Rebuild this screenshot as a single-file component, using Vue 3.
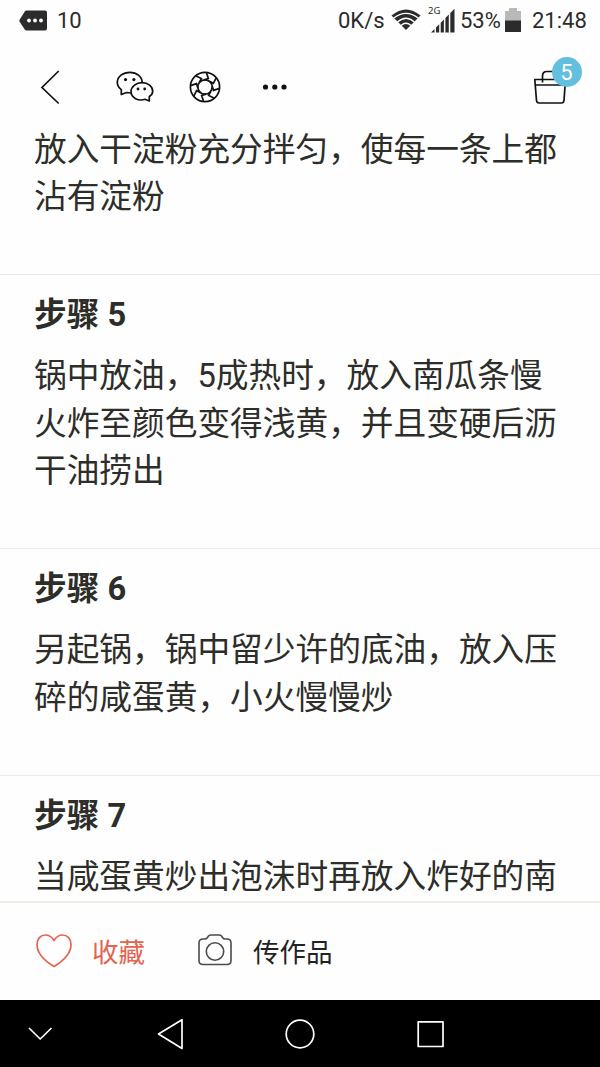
<script setup>
const steps = [
  { id: 4, title: '', lines: ['放入干淀粉充分拌匀，使每一条上都', '沾有淀粉'] },
  { id: 5, title: '步骤 5', lines: ['锅中放油，5成热时，放入南瓜条慢', '火炸至颜色变得浅黄，并且变硬后沥', '干油捞出'] },
  { id: 6, title: '步骤 6', lines: ['另起锅，锅中留少许的底油，放入压', '碎的咸蛋黄，小火慢慢炒'] },
  { id: 7, title: '步骤 7', lines: ['当咸蛋黄炒出泡沫时再放入炸好的南'] },
]
const blades = [0, 45, 90, 135, 180, 225, 270, 315]
</script>

<template>
  <div class="screen">
    <header class="status">
      <svg class="note" width="29" height="22" viewBox="0 0 29 22">
        <path d="M7.5 .5H26a2 2 0 0 1 2 2v16a2 2 0 0 1-2 2H7.5Q6.5 20.500 5.800 19.500L.6 11.800Q0 10.800 .6 9.800L5.800 1.500Q6.500 .5 7.500 .5Z" fill="#2b2b2b" />
        <g fill="#fff"><circle cx="10" cy="10.500" r="1.900" /><circle cx="16" cy="10.500" r="1.900" /><circle cx="22" cy="10.500" r="1.900" /></g>
      </svg>
      <span class="count">10</span>
      <span class="speed">0K/s</span>
      <svg class="wifi" width="30" height="22" viewBox="0 0 30 22">
        <path d="M.5 6.500Q15-5.500 29.500 6.500L15 21Z" fill="#2b2b2b" />
        <g fill="none" stroke="#fff" stroke-width="1.200">
          <path d="M2.500 9.300Q15-.5 27.500 9.300" />
          <path d="M6.500 13Q15 5.500 23.500 13" />
          <path d="M10 16.500Q15 12 20 16.500" />
        </g>
      </svg>
      <div class="cell">
        <span class="gen">2G</span>
        <svg width="24" height="26" viewBox="0 0 24 26" fill="#2b2b2b">
          <path d="M0 24.500L3.500 21V24.500ZM5 24.500V19.500L8.200 16.300V24.500ZM9.700 24.500V14.800L12.900 11.600V24.500ZM14.400 24.500V10L17.800 6.600V24.500ZM19.300 24.500V5L23.500 .8V24.500Z" />
        </svg>
      </div>
      <span class="pct">53%</span>
      <svg class="battery" width="16" height="25" viewBox="0 0 16 25">
        <path d="M0 3H4V0H12V3H16V13H0Z" fill="#b9b9b9" /><path d="M0 12.500H16V24H0Z" fill="#2b2b2b" />
      </svg>
      <span class="time">21:48</span>
    </header>

    <nav class="toolbar">
      <svg class="back" width="22" height="38" viewBox="0 0 22 38" fill="none" stroke="#111" stroke-width="1.700">
        <path d="M18.700 3L2 19.500L18.700 35.500" />
      </svg>
      <svg class="wechat" width="40" height="34" viewBox="0 0 40 34" fill="none" stroke="#111" stroke-width="1.700" stroke-linejoin="round">
        <path d="M15 23L10.500 22.500L5.300 24.500V19.700C2.700 17.600 1.300 15 1.300 12.500C1.300 6.500 7 2.300 14 2.300C20.500 2.300 26 6.300 26.300 12.600" />
        <path d="M33.300 26.500V31L29 29.300C22.500 31.500 15 28 15 21.600C15 16.700 20 12.700 26 12.700C32 12.700 36.700 16.500 36.700 21.300C36.700 23.500 35.500 25.300 33.300 26.500Z" />
        <g fill="#111" stroke="none"><circle cx="9.500" cy="9.600" r="1.600" /><circle cx="17.900" cy="9.600" r="1.600" /><circle cx="22" cy="19" r="1.400" /><circle cx="28.700" cy="19" r="1.400" /></g>
      </svg>
      <svg class="aperture" width="32" height="32" viewBox="-16 -16 32 32" fill="none" stroke="#111" stroke-width="1.700">
        <circle r="14.600" /><circle r="7.200" />
        <path v-for="a in blades" :key="a" d="M-6.300 -3.500L-4.800 -7.800L-10.800 -9.900" :transform="`rotate(${a + 8})`" />
      </svg>
      <svg class="more" width="26" height="8" viewBox="0 0 26 8" fill="#111">
        <circle cx="3.500" cy="4" r="2.600" /><circle cx="12.800" cy="4" r="2.600" /><circle cx="22" cy="4" r="2.600" />
      </svg>
      <div class="basket">
        <svg width="34" height="36" viewBox="0 0 34 36" fill="none" stroke="#111" stroke-width="1.700" stroke-linejoin="round">
          <path d="M1.800 10.500H32.500L31 31.500Q30.700 34 28.500 34H6Q3.800 34 3.500 31.500ZM2.500 16H32M9.500 13.500V7Q9.500 2.500 14 2.500H20.500Q25 2.500 25 7V12.500" />
        </svg>
        <span class="badge">5</span>
      </div>
    </nav>

    <main class="recipe">
      <section v-for="s in steps" :key="s.id" class="step">
        <h2 v-if="s.title">{{ s.title }}</h2>
        <p v-for="l in s.lines" :key="l">{{ l }}</p>
      </section>
    </main>

    <footer class="actions">
      <svg class="heart" width="38" height="36" viewBox="0 0 38 36" fill="none" stroke="#e36450" stroke-width="1.700" stroke-linejoin="round">
        <path d="M19 7.500C16.500 3.500 13.500 2 10.500 2C5.500 2 2 6 2 11.500C2 20 9 27.500 19 33.500C29 27.500 36 20 36 11.500C36 6 32.500 2 27.500 2C24.500 2 21.500 3.500 19 7.500Z" />
      </svg>
      <span class="fav">收藏</span>
      <svg class="camera" width="36" height="34" viewBox="0 0 36 34" fill="none" stroke="#4b4b4b" stroke-width="1.600" stroke-linejoin="round">
        <path d="M6 6H8Q9.500 6 10.500 4.500L11.500 3Q12.500 2 14 2H22Q23.500 2 24.500 3L25.500 4.500Q26.500 6 28 6H30Q34 6 34 10V27.500Q34 31.500 30 31.500H6Q2 31.500 2 27.500V10Q2 6 6 6Z" />
        <circle cx="18" cy="18.500" r="8.700" />
      </svg>
      <span class="upload">传作品</span>
    </footer>

    <div class="system">
      <svg width="600" height="67" viewBox="0 0 600 67" fill="none" stroke="#fff" stroke-width="1.700" stroke-linejoin="round">
        <path d="M29 28L40.200 39L51.500 28" />
        <path d="M182 19.700V48.500L158.500 34Z" />
        <circle cx="300" cy="34" r="13.800" />
        <path d="M418.200 21.800H443V46.500H418.200Z" />
      </svg>
    </div>
  </div>
</template>

<style>
body { margin: 0; overflow: hidden; }
</style>

<style scoped>
.screen {
  width: 600px;
  height: 1067px;
  display: flex;
  flex-direction: column;
  overflow: hidden;
  background: #fefefe;
  color: #2d2d29;
  font-family: Roboto, "Noto Sans CJK SC", sans-serif;
}
svg { display: block; flex: none; }
.status {
  height: 42px;
  flex: none;
  display: flex;
  align-items: center;
  font: 22px/42px Roboto, sans-serif;
  color: #2b2b2b;
  white-space: nowrap;
}
.note { margin-left: 19px; margin-top: -1px; }
.count { width: 281px; margin-left: 9px; }
.speed { width: 53px; }
.wifi { margin-top: -3px; }
.cell { position: relative; margin-left: 8px; width: 26px; display: flex; justify-content: flex-end; margin-top: -1px; }
.gen { position: absolute; left: -1px; top: -2px; font: 9.500px/10px "Noto Sans", sans-serif; }
.pct { width: 45px; margin-left: 5px; }
.battery { margin-top: -1px; }
.time { margin-left: 11px; }
.toolbar {
  height: 88px;
  flex: none;
  display: flex;
  align-items: center;
}
.toolbar > * { margin-top: 1px; }
.back { margin-left: 40px; }
.wechat { margin-left: 54px; }
.aperture { margin-left: 33px; }
.more { margin-left: 41px; }
.basket { position: relative; margin-left: auto; margin-right: 33px; }
.badge {
  position: absolute;
  left: 18.500px;
  top: -12px;
  width: 30px;
  height: 30px;
  border-radius: 50%;
  background: #62bfdd;
  color: #fff;
  text-align: center;
  font: 22px/31px Roboto, sans-serif;
}
.recipe { flex: 1; min-height: 0; overflow: hidden; margin-top: -3.500px; }
.step { padding: 0 0 52.600px 34px; }
.step + .step { border-top: 1px solid #ebebe6; padding-top: 16px; }
h2 { margin: 0 0 14px; font-size: 32.700px; line-height: 48px; font-weight: 700; }
p { margin: 0; font-size: 32.700px; line-height: 47.500px; white-space: nowrap; }
.actions {
  height: 97px;
  flex: none;
  display: flex;
  align-items: center;
  border-top: 2px solid #ecece4;
  font-size: 26.500px;
}
.actions > span { position: relative; top: -1px; }
.heart { margin-left: 35px; margin-top: -1px; }
.fav { width: 105px; margin-left: 19px; color: #e36450; }
.camera { margin-left: 0; margin-top: -3px; }
.upload { margin-left: 20px; color: #222; }
.system { height: 67px; flex: none; background: #000; }
</style>
